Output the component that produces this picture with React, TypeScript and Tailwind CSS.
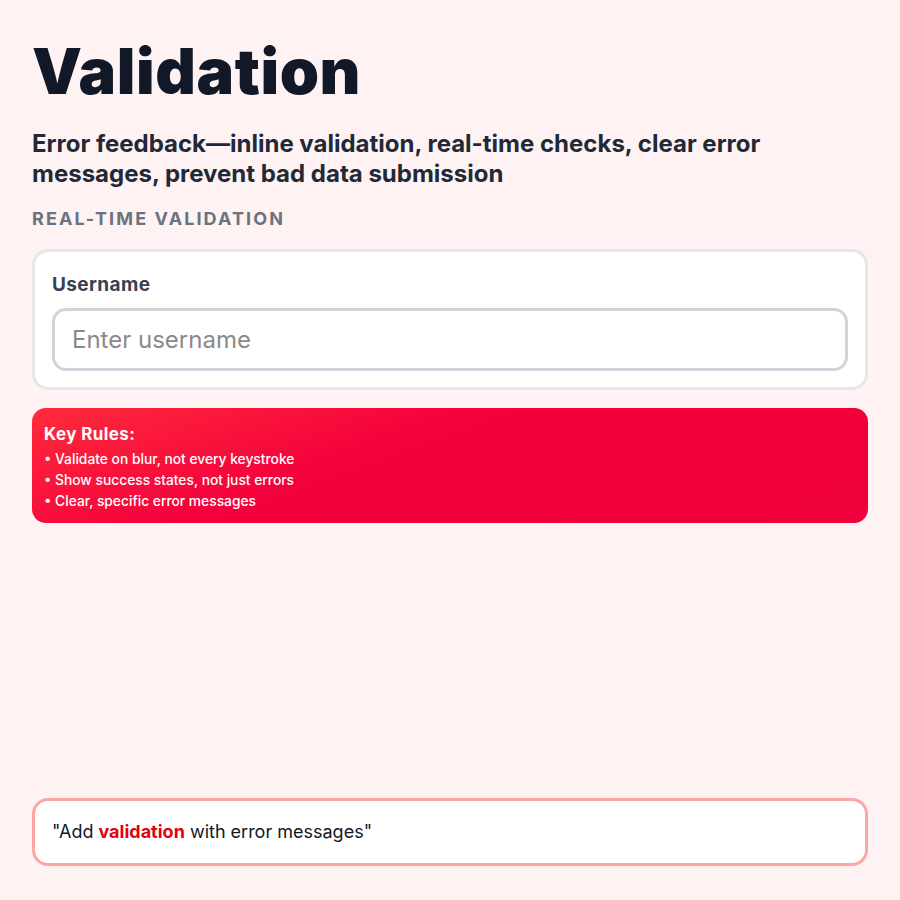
import React from 'react';

const rules = [
  'Validate on blur, not every keystroke',
  'Show success states, not just errors',
  'Clear, specific error messages',
];

export default function App() {
  return (
    <div
      className="min-h-screen flex flex-col bg-[#fef2f2] px-8 pt-[34px] pb-[34px]"
      style={{ fontFamily: 'Inter, "Noto Sans", sans-serif' }}
    >
      <h1 className="text-[63px] leading-[1.2] font-black text-[#111827] tracking-[0.6px]">
        Validation
      </h1>
      <p className="mt-[19px] text-[24px] leading-[30px] font-bold text-[#1f2937]">
        Error feedback—inline validation, real-time checks, clear error messages, prevent bad data submission
      </p>

      <h2 className="mt-4 text-[18px] leading-[28px] font-bold uppercase tracking-[2.1px] text-[#6b7280]">
        Real-time validation
      </h2>

      {/* Form card */}
      <div className="mt-4 rounded-2xl border-[3px] border-[#e5e7eb] bg-white px-[17px] pt-[19px] pb-4">
        <label className="block text-[19px] leading-[28px] font-bold tracking-[0.4px] text-[#374151]">
          Username
        </label>
        <input
          type="text"
          placeholder="Enter username"
          className="mt-[9px] block w-full h-[63px] rounded-[14px] border-[3px] border-[#d1d5db] bg-white px-[17px] text-[24px] text-[#1f2937] placeholder:text-[#8a8a8a] outline-none"
        />
      </div>

      {/* Key rules */}
      <div className="mt-[18px] rounded-[14px] bg-[linear-gradient(160deg,#ff2b3b_0%,#f4003c_40%,#ee003a_100%)] px-3 pt-[14px] pb-[11px] text-white">
        <div className="text-[17px] leading-[24px] font-bold tracking-[0.4px]">Key Rules:</div>
        <ul className="mt-[3px] text-[13.8px] leading-[21px] font-medium">
          {rules.map((r) => (
            <li key={r}>• {r}</li>
          ))}
        </ul>
      </div>

      {/* Prompt */}
      <div className="mt-auto rounded-2xl border-[3px] border-[#fca5a5] bg-white px-[17px] py-[17px] text-[18px] leading-[28px] text-[#111827]">
        "Add <span className="font-bold text-[#e3000f]">validation</span> with error messages"
      </div>
    </div>
  );
}
